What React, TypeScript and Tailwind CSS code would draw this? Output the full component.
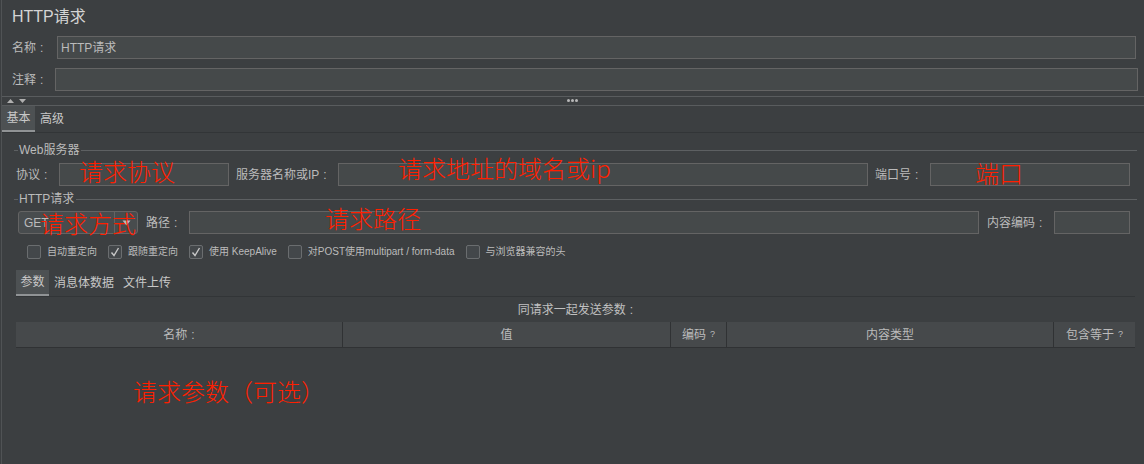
import React from "react";

const Check = ({ checked }: { checked?: boolean }) => (
  <div className="w-[14px] h-[14px] rounded-[2px] border border-[#6a6d6f] bg-[#43474a] flex items-center justify-center shrink-0">
    {checked && (
      <svg width="12" height="12" viewBox="0 0 12 12">
        <polyline points="2.5,6.5 5,9.5 9.5,2" fill="none" stroke="#c8c8c8" strokeWidth="1.4" />
      </svg>
    )}
  </div>
);

const CheckItem = ({ checked, label }: { checked?: boolean; label: string }) => (
  <div className="flex items-center">
    <Check checked={checked} />
    <span className="ml-[6px] text-[10px] leading-[14px] text-[#bbbbbb] whitespace-nowrap">{label}</span>
  </div>
);

const GroupHeader = ({ title }: { title: string }) => (
  <div className="flex items-center h-[15px] pl-[12px] pr-[7px]">
    <div className="w-[4px] h-px bg-[#5d6062]" />
    <span className="px-[1px] text-[12px] leading-[15px] text-[#bbbbbb] whitespace-nowrap">{title}</span>
    <div className="flex-1 h-px bg-[#5d6062] ml-[1px]" />
  </div>
);

const Input = ({ className = "", children }: { className?: string; children?: React.ReactNode }) => (
  <div className={"h-[23px] border border-[#646464] bg-[#45494a] flex items-center px-[3px] text-[12px] text-[#bbbbbb] " + className}>
    {children}
  </div>
);

const Red = ({ className, children }: { className: string; children: React.ReactNode }) => (
  <div className={"absolute text-[24px] leading-[24px] font-light text-[#ff1f00] whitespace-nowrap font-[family-name:'Noto_Sans_CJK_SC',sans-serif] " + className}>
    {children}
  </div>
);

const Colon = () => <span className="ml-[4px]">:</span>;

export default function App() {
  return (
    <div className="relative w-[1144px] h-[464px] bg-[#3c3f41] overflow-hidden pl-px font-[family-name:'Liberation_Sans','Noto_Sans_CJK_SC',sans-serif] text-[#bbbbbb]">
      <div className="h-full border-l border-[#505355] flex flex-col">
        {/* title */}
        <div className="mt-[7px] h-[20px] pl-[10px] text-[16px] leading-[20px] text-[#d4d4d4]">HTTP请求</div>

        {/* name */}
        <div className="mt-[9px] flex items-center h-[23px]">
          <div className="w-[55px] pl-[10px] text-[12px] whitespace-nowrap">名称<Colon /></div>
          <Input className="flex-1 mr-[8px]">HTTP请求</Input>
        </div>
        {/* comment */}
        <div className="mt-[9px] flex items-center h-[23px]">
          <div className="w-[53px] pl-[10px] text-[12px] whitespace-nowrap">注释<Colon /></div>
          <Input className="flex-1 mr-[6px]" />
        </div>

        {/* split bar */}
        <div className="mt-[5px] h-[10px] border-t border-b border-[#595c5e] relative flex items-center">
          <svg className="ml-[5px]" width="20" height="8" viewBox="0 0 20 8">
            <polygon points="0,6 3.5,2 7,6" fill="#b0b0b0" />
            <polygon points="12,2 19,2 15.5,6" fill="#b0b0b0" />
          </svg>
          <div className="absolute left-[565px] top-[2px] flex gap-[1px]">
            <div className="w-[3px] h-[3px] rounded-full bg-[#b8b8b8]" />
            <div className="w-[3px] h-[3px] rounded-full bg-[#b8b8b8]" />
            <div className="w-[3px] h-[3px] rounded-full bg-[#b8b8b8]" />
          </div>
        </div>

        {/* main tabs */}
        <div className="h-[27px] flex border-b border-[#323537]">
          <div className="w-[33px] bg-[#4d5153] border-b-[2px] border-[#909395] flex items-center justify-center text-[12px] text-[#c8c8c8]">基本</div>
          <div className="px-[5px] flex items-center text-[12px] text-[#c8c8c8]">高级</div>
        </div>

        {/* Web server */}
        <div className="mt-[10px]">
          <GroupHeader title="Web服务器" />
        </div>
        <div className="mt-[5px] flex items-center h-[23px] pl-[14px] pr-[14px] text-[12px]">
          <div className="w-[43px] whitespace-nowrap">协议<Colon /></div>
          <Input className="w-[170px]" />
          <div className="ml-[7px] w-[102px] whitespace-nowrap">服务器名称或IP<Colon /></div>
          <Input className="flex-1" />
          <div className="ml-[7px] w-[55px] whitespace-nowrap">端口号<Colon /></div>
          <Input className="w-[200px]" />
        </div>

        {/* HTTP request */}
        <div className="mt-[6px]">
          <GroupHeader title="HTTP请求" />
        </div>
        <div className="mt-[4px] flex items-center h-[23px] pl-[16px] pr-[14px] text-[12px]">
          <div className="w-[120px] h-[23px] rounded-[3px] border border-[#646464] bg-[#484c4e] flex">
            <div className="flex-1 flex items-center pl-[5px]">GET</div>
            <div className="w-[23px] border-l border-[#646464] flex items-center justify-center">
              <svg width="9" height="6" viewBox="0 0 9 6">
                <polygon points="0.5,0.5 8.5,0.5 4.5,5.5" fill="#bbbbbb" />
              </svg>
            </div>
          </div>
          <div className="ml-[8px] w-[43px] whitespace-nowrap">路径<Colon /></div>
          <Input className="flex-1" />
          <div className="ml-[8px] w-[67px] whitespace-nowrap">内容编码<Colon /></div>
          <Input className="w-[76px]" />
        </div>

        {/* checkboxes */}
        <div className="mt-[11px] h-[14px] flex items-center pl-[25px] gap-[11px]">
          <CheckItem label="自动重定向" />
          <CheckItem checked label="跟随重定向" />
          <CheckItem checked label="使用 KeepAlive" />
          <CheckItem label="对POST使用multipart / form-data" />
          <CheckItem label="与浏览器兼容的头" />
        </div>

        {/* sub section */}
        <div className="mt-[11px] ml-[14px] mr-[9px] flex flex-col">
          <div className="h-[27px] flex border-b border-[#323537]">
            <div className="w-[33px] bg-[#4d5153] border-b-[2px] border-[#909395] flex items-center justify-center text-[12px] text-[#c8c8c8]">参数</div>
            <div className="px-[5px] flex items-center text-[12px] text-[#c8c8c8]">消息体数据</div>
            <div className="px-[4px] flex items-center text-[12px] text-[#c8c8c8]">文件上传</div>
          </div>
          <div className="h-[25px] flex items-center justify-center text-[12px] text-[#c0c0c0] whitespace-nowrap">同请求一起发送参数<Colon /></div>
          <div className="h-[26px] flex bg-[#46494b] border-b border-[#303234] text-[12px] text-[#bbbbbb]">
            <div className="w-[327px] border-r border-[#303234] flex items-center justify-center">名称<Colon /></div>
            <div className="w-[328px] border-r border-[#303234] flex items-center justify-center">值</div>
            <div className="w-[56px] border-r border-[#303234] flex items-center justify-center">
              编码<span className="ml-[4px] text-[9px]">?</span>
            </div>
            <div className="w-[327px] border-r border-[#303234] flex items-center justify-center">内容类型</div>
            <div className="flex-1 flex items-center justify-center">
              包含等于<span className="ml-[4px] text-[9px]">?</span>
            </div>
          </div>
        </div>
      </div>

      {/* red annotations */}
      <Red className="left-[79px] top-[159px]">请求协议</Red>
      <Red className="left-[398px] top-[156px]">请求地址的域名或ip</Red>
      <Red className="left-[975px] top-[161px]">端口</Red>
      <Red className="left-[40px] top-[211px]">请求方式</Red>
      <Red className="left-[325px] top-[206px]">请求路径</Red>
      <Red className="left-[133px] top-[379px]">请求参数（可选）</Red>
    </div>
  );
}
